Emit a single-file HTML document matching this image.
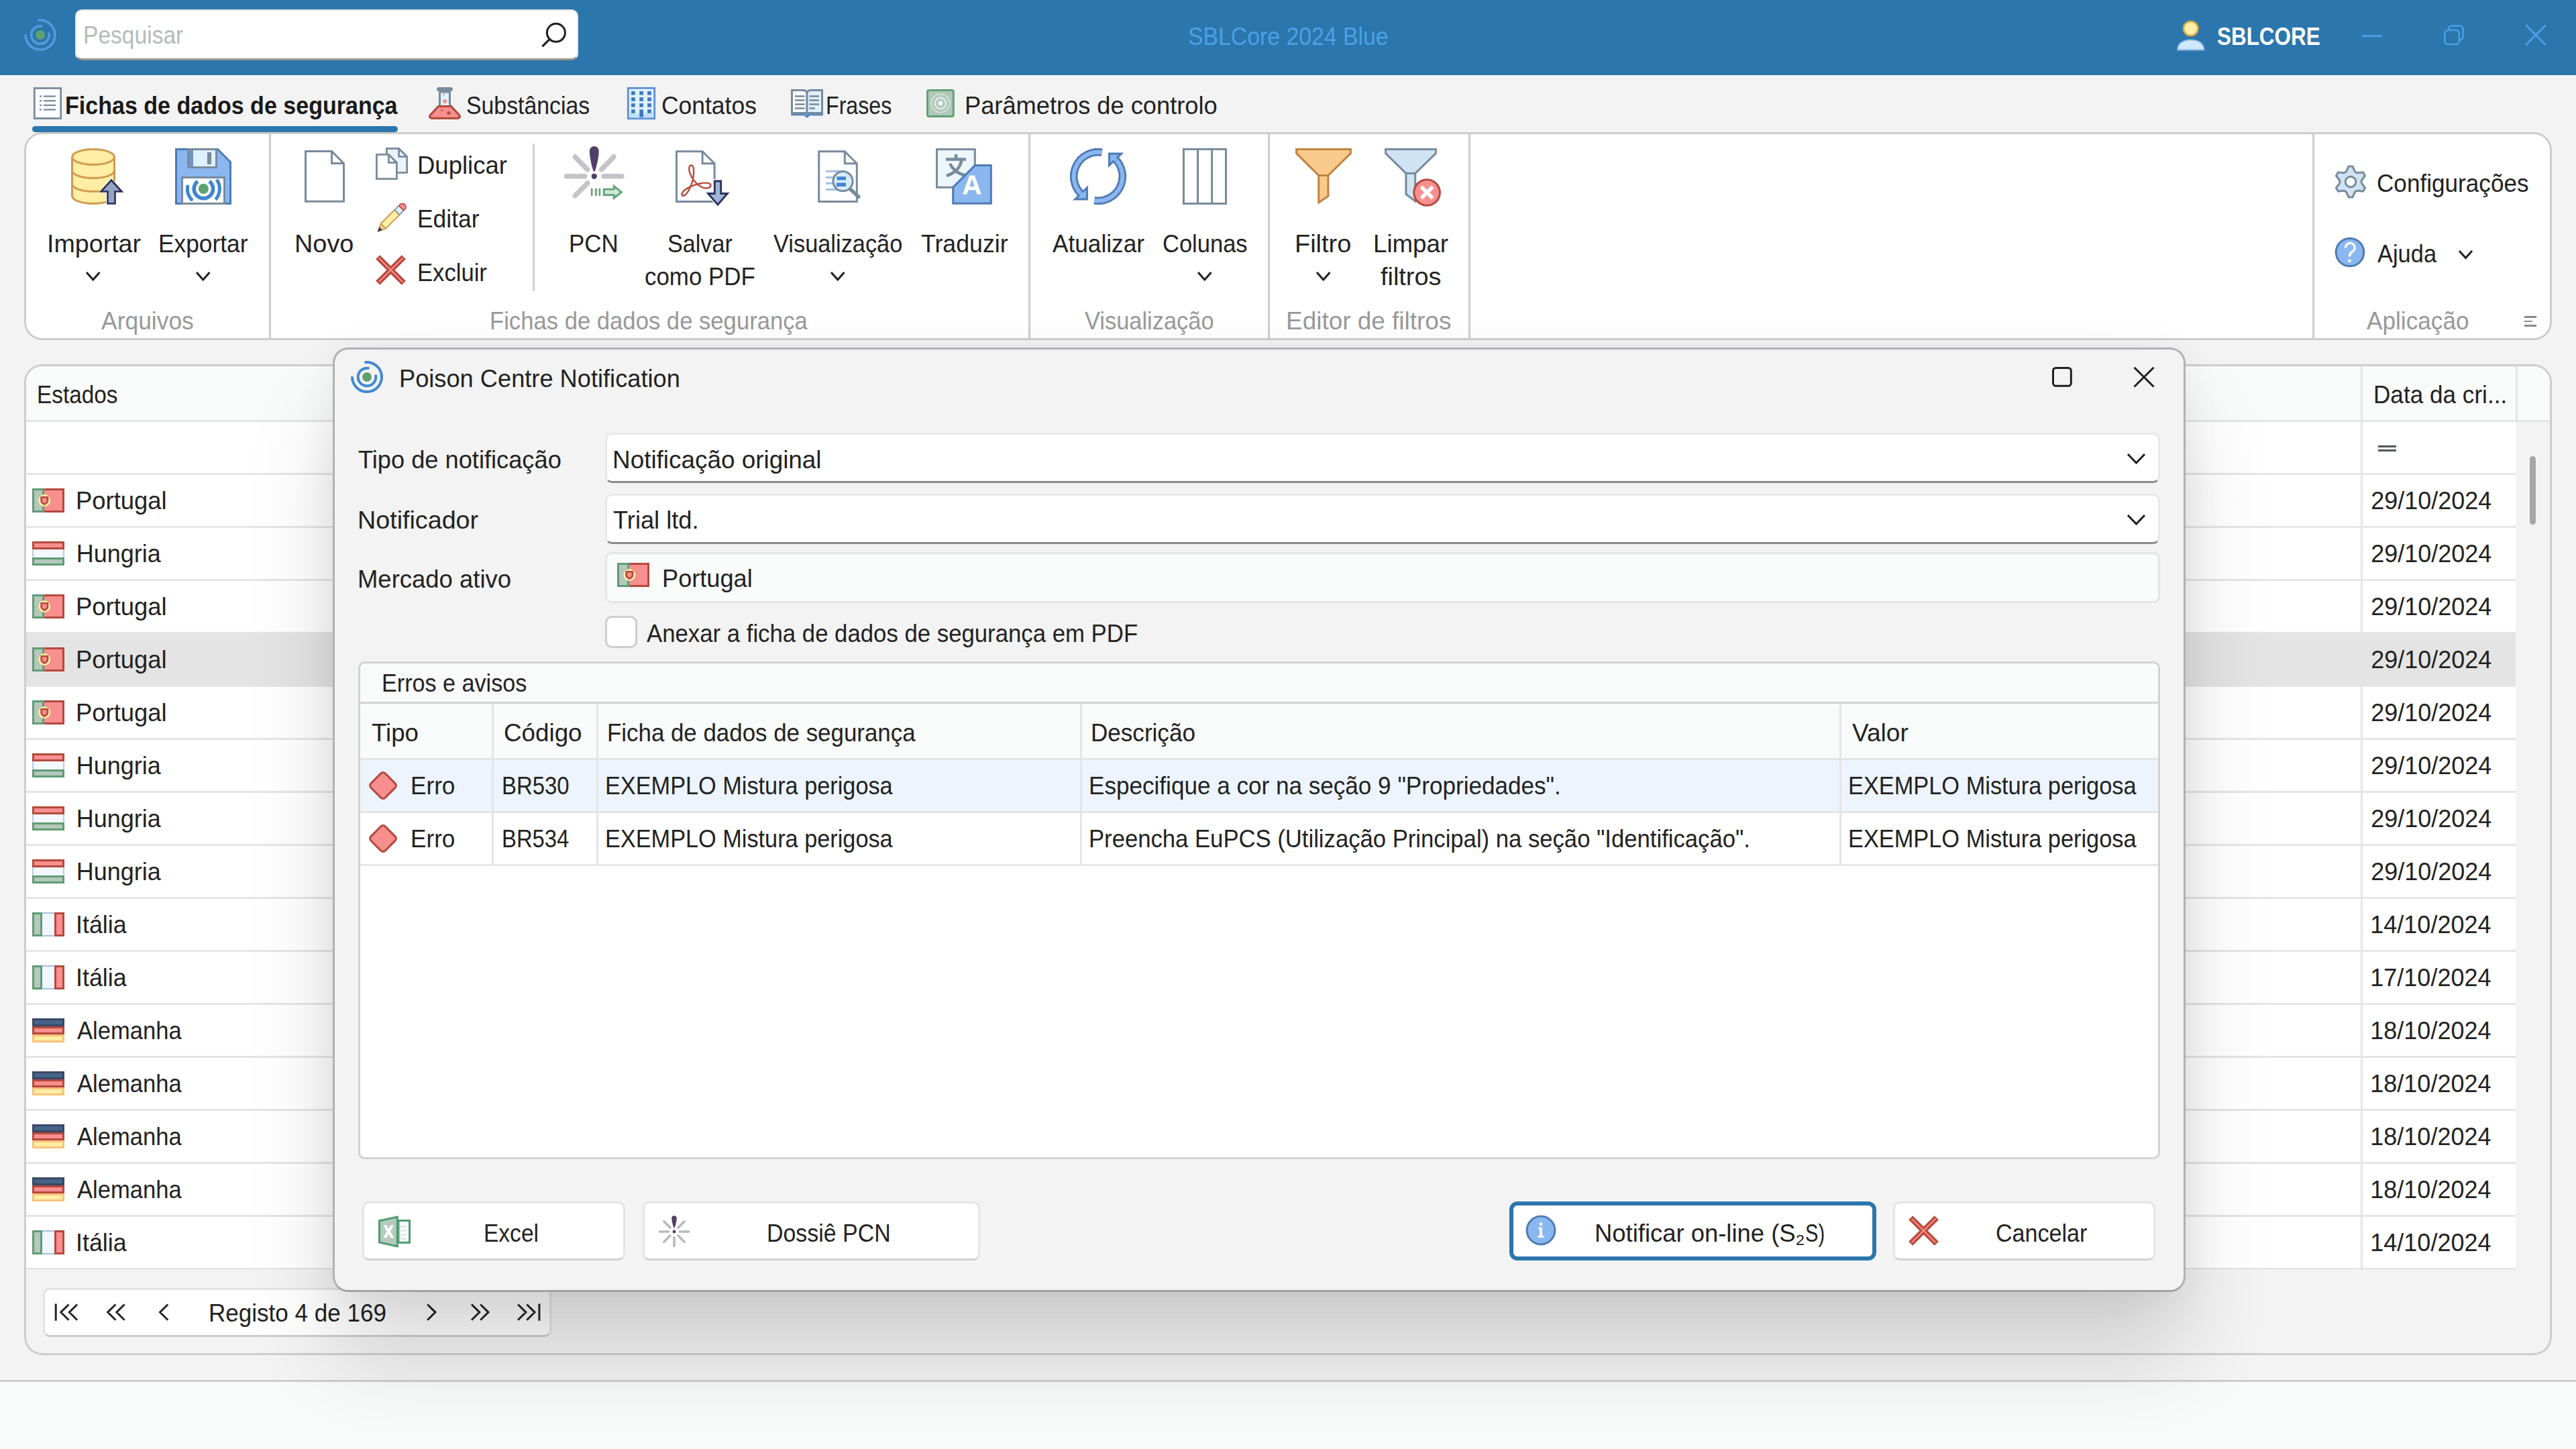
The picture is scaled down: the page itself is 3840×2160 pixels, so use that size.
<!DOCTYPE html>
<html><head><meta charset="utf-8"><title>SBLCore 2024 Blue</title>
<style>
html,body{margin:0;padding:0;}
body{width:3840px;height:2160px;overflow:hidden;background:#f3f3f3;position:relative;font-family:"Liberation Sans",sans-serif;}
.b{position:absolute;box-sizing:border-box;display:block;}
.t{position:absolute;white-space:nowrap;line-height:1;transform-origin:0 0;font-family:"Liberation Sans",sans-serif;}
</style></head><body>
<div class="b" style="left:0px;top:0px;width:3840px;height:112px;background:#2b76ad;"></div>
<svg class="b" style="left:31.9px;top:24px" width="56.00000000000001" height="56" viewBox="31.9 24 56.00000000000001 56"><circle cx="59.9" cy="52" r="7" fill="#5fa170"/><path d="M61.75 38.83A13.3 13.3 0 1 0 73.07 50.15" fill="none" stroke="#529bdc" stroke-width="3.6" stroke-linecap="round"/><path d="M57.98 30.08A22 22 0 1 1 37.91 52.77" fill="none" stroke="#529bdc" stroke-width="3.6" stroke-linecap="round"/></svg>
<div class="b" style="left:112px;top:14px;width:750px;height:76px;background:#fff;border-radius:10px;border:2px solid #e9e7e5;border-bottom:3px solid #9a958f;"></div>
<span class="t" style="left:124.0px;top:35.0px;font-size:36px;color:#b4bcba;transform:scaleX(0.9325);">Pesquisar</span>
<svg class="b" style="left:804px;top:31px" width="43" height="43" viewBox="804 31 43 43"><circle cx="828.900" cy="48.800" r="13.500" fill="none" stroke="#1f1f1f" stroke-width="3"/><path d="M819.300 58.400L808.300 69.400" stroke="#1f1f1f" stroke-width="3.200"/></svg>
<span class="t" style="left:1770.5px;top:36.8px;font-size:36px;color:#4ba0e6;transform:scaleX(0.9384);">SBLCore 2024 Blue</span>
<svg class="b" style="left:3242px;top:28px" width="48" height="50" viewBox="3242 28 48 50"><path d="M3246 74.500C3246 65 3254 59.300 3265.700 59.300S3285.500 65 3285.500 74.500z" fill="#cfe8fa" stroke="#8eb4e2" stroke-width="1.800"/><circle cx="3265.700" cy="42.500" r="10.800" fill="#ffeea3" stroke="#d9a441" stroke-width="2.600"/></svg>
<span class="t" style="left:3305.1px;top:36.7px;font-size:36px;color:#fff;font-weight:bold;transform:scaleX(0.8727);">SBLCORE</span>
<svg class="b" style="left:3518px;top:48px" width="36" height="12" viewBox="3518 48 36 12"><path d="M3521 53.800H3551" stroke="#4a9fe6" stroke-width="3"/></svg>
<svg class="b" style="left:3641px;top:35px" width="34" height="35" viewBox="3641 35 34 35"><rect x="3650.500" y="38.500" width="21" height="21" rx="4.500" fill="none" stroke="#4a9fe6" stroke-width="2.600"/><rect x="3644.300" y="45" width="21.500" height="21" rx="4.500" fill="#2b76ad" stroke="#4a9fe6" stroke-width="2.600"/></svg>
<svg class="b" style="left:3762px;top:34px" width="36" height="36" viewBox="3762 34 36 36"><path d="M3765.500 37.500L3794.700 66.800M3794.700 37.500L3765.500 66.800" stroke="#4a9fe6" stroke-width="3"/></svg>
<svg class="b" style="left:48px;top:128px" width="46" height="52" viewBox="48 128 46 52"><rect x="51.300" y="131.500" width="39.400" height="45" fill="#fff" stroke="#788b9c" stroke-width="2.800"/><rect x="59" y="142.4" width="3" height="2.300" fill="#788b9c"/><rect x="65" y="142.4" width="18" height="2.300" fill="#788b9c"/><rect x="59" y="149.1" width="3" height="2.300" fill="#788b9c"/><rect x="65" y="149.1" width="18" height="2.300" fill="#788b9c"/><rect x="59" y="155.70000000000002" width="3" height="2.300" fill="#788b9c"/><rect x="65" y="155.70000000000002" width="18" height="2.300" fill="#788b9c"/><rect x="59" y="162.3" width="3" height="2.300" fill="#788b9c"/><rect x="65" y="162.3" width="18" height="2.300" fill="#788b9c"/></svg>
<span class="t" style="left:96.8px;top:138.9px;font-size:37px;color:#1a1a1a;font-weight:bold;transform:scaleX(0.9198);">Fichas de dados de segurança</span>
<div class="b" style="left:48px;top:188px;width:545px;height:9px;background:#2b76ad;border-radius:4.5px;"></div>
<svg class="b" style="left:636px;top:127px" width="54" height="53" viewBox="636 127 54 53"><path d="M655.500 137V156.500L641.500 171.500Q639 176 644.500 176.300H681.500Q687 176 684.500 171.500L670.500 156.500V137z" fill="#dff0fe" stroke="#788b9c" stroke-width="3" stroke-linejoin="round"/><path d="M653.500 158.500H672.500L684.500 171.500Q687 176 681.500 176.300H644.500Q639 176 641.500 171.500z" fill="#f78f8f" stroke="#b5493c" stroke-width="3" stroke-linejoin="round"/><rect x="651.500" y="130.500" width="23" height="5" rx="2" fill="#788b9c" stroke="#788b9c" stroke-width="1"/><circle cx="663.200" cy="151" r="3" fill="#f78f8f"/><circle cx="661.500" cy="140.600" r="1.500" fill="#f78f8f"/><circle cx="669" cy="168.500" r="2.600" fill="#b5493c"/><circle cx="658.700" cy="164.500" r="1.300" fill="#b5493c"/></svg>
<span class="t" style="left:694.9px;top:139.5px;font-size:36px;color:#222;transform:scaleX(0.9389);">Substâncias</span>
<svg class="b" style="left:933px;top:128px" width="46" height="52" viewBox="933 128 46 52"><rect x="936.300" y="131.300" width="39.400" height="45.400" fill="#dff0fe" stroke="#5b90d3" stroke-width="2.800"/><rect x="937.700" y="169" width="36.600" height="6.300" fill="#bfe0f8"/><rect x="941.1" y="136" width="5.600" height="5.600" fill="#3c78c0"/><rect x="941.1" y="145.2" width="5.600" height="5.600" fill="#3c78c0"/><rect x="941.1" y="154.1" width="5.600" height="5.600" fill="#3c78c0"/><rect x="941.1" y="163.2" width="5.600" height="5.600" fill="#3c78c0"/><rect x="953.3000000000001" y="136" width="5.600" height="5.600" fill="#3c78c0"/><rect x="953.3000000000001" y="145.2" width="5.600" height="5.600" fill="#3c78c0"/><rect x="953.3000000000001" y="154.1" width="5.600" height="5.600" fill="#3c78c0"/><rect x="953.3000000000001" y="163.2" width="5.600" height="11.600" fill="#3c78c0"/><rect x="965.2" y="136" width="5.600" height="5.600" fill="#3c78c0"/><rect x="965.2" y="145.2" width="5.600" height="5.600" fill="#3c78c0"/><rect x="965.2" y="154.1" width="5.600" height="5.600" fill="#3c78c0"/><rect x="965.2" y="163.2" width="5.600" height="5.600" fill="#3c78c0"/></svg>
<span class="t" style="left:986.2px;top:139.5px;font-size:36px;color:#222;transform:scaleX(0.9846);">Contatos</span>
<svg class="b" style="left:1177px;top:131px" width="52" height="47" viewBox="1177 131 52 47"><path d="M1180 168H1226V171.500H1207L1203 175L1199 171.500H1180z" fill="#5b96dd" stroke="#4e7ab5" stroke-width="1.500"/><path d="M1180.500 134.500H1197Q1202 134.500 1203 138.500V168.500H1180.500z" fill="#fff" stroke="#788b9c" stroke-width="3"/><path d="M1225.500 134.500H1209Q1204 134.500 1203 138.500V168.500H1225.500z" fill="#dff0fe" stroke="#788b9c" stroke-width="3"/><rect x="1185" y="142.2" width="14.500" height="2.600" fill="#788b9c"/><rect x="1206.500" y="142.2" width="14.5" height="2.600" fill="#788b9c"/><rect x="1185" y="148.2" width="14.500" height="2.600" fill="#788b9c"/><rect x="1206.500" y="148.2" width="14.5" height="2.600" fill="#788b9c"/><rect x="1185" y="154.2" width="14.500" height="2.600" fill="#788b9c"/><rect x="1206.500" y="154.2" width="14.5" height="2.600" fill="#788b9c"/><rect x="1185" y="160.2" width="14.500" height="2.600" fill="#788b9c"/><rect x="1206.500" y="160.2" width="8.5" height="2.600" fill="#788b9c"/></svg>
<span class="t" style="left:1230.7px;top:139.5px;font-size:36px;color:#222;transform:scaleX(0.8925);">Frases</span>
<svg class="b" style="left:1379px;top:131px" width="46" height="46" viewBox="1379 131 46 46"><rect x="1382.500" y="134.500" width="38.800" height="39" rx="2.500" fill="#b4c6b9" stroke="#5ea273" stroke-width="3"/><circle cx="1401.9" cy="154" r="13.700" fill="none" stroke="#d3e8df" stroke-width="1.600"/><circle cx="1401.9" cy="154" r="8.200" fill="none" stroke="#dcefe6" stroke-width="2.600"/><circle cx="1401.9" cy="154" r="3.200" fill="#fff"/></svg>
<span class="t" style="left:1437.5px;top:139.5px;font-size:36px;color:#222;transform:scaleX(1.0066);">Parâmetros de controlo</span>
<div class="b" style="left:36px;top:197px;width:3768px;height:310px;background:#fff;border:3px solid #cdcdcd;border-radius:27px;"></div>
<div class="b" style="left:400.5px;top:200px;width:3.0px;height:304px;background:#cdcdcd;"></div>
<div class="b" style="left:1533px;top:200px;width:3px;height:304px;background:#cdcdcd;"></div>
<div class="b" style="left:1890px;top:200px;width:3px;height:304px;background:#cdcdcd;"></div>
<div class="b" style="left:2189px;top:200px;width:3px;height:304px;background:#cdcdcd;"></div>
<div class="b" style="left:3446.5px;top:200px;width:3.0px;height:304px;background:#cdcdcd;"></div>
<div class="b" style="left:794px;top:214px;width:3px;height:220px;background:#d2d2d2;"></div>
<svg class="b" style="left:103px;top:218px" width="85" height="90" viewBox="103 218 85 90"><path d="M107.5 234V292C107.5 298.5 121 303.5 139 303.5S170.5 298.5 170.5 292V234" fill="#ffeea3" stroke="#d09a4f" stroke-width="3"/><ellipse cx="139" cy="234" rx="31.5" ry="11.5" fill="#ffeea3" stroke="#d09a4f" stroke-width="3"/><path d="M107.5 254C107.5 260.5 121 265.5 139 265.5S170.5 260.5 170.5 254" fill="none" stroke="#d09a4f" stroke-width="3"/><path d="M107.5 274C107.5 280.5 121 285.5 139 285.5S170.5 280.5 170.5 274" fill="none" stroke="#d09a4f" stroke-width="3"/><path d="M166 265L186 287.5H173V306H158V287.5H146z" fill="#fff"/><path d="M166 268.5L181.5 285.5H171.5V303.5H160.5V285.5H150.5z" fill="#93a4c0" stroke="#2b2f5a" stroke-width="2.6"/></svg>
<svg class="b" style="left:259px;top:219px" width="88" height="88" viewBox="259 219 88 88"><path d="M262.5 222.5H324.5L343.5 241.5V303.5H262.5z" fill="#8bb7f0" stroke="#4e7ab5" stroke-width="3"/><rect x="280.5" y="222.5" width="42" height="27" fill="#6f94c6" stroke="#788b9c" stroke-width="3"/><rect x="288" y="224" width="33" height="24" fill="#dff0fe"/><rect x="309" y="227" width="6" height="18" fill="#788b9c"/><rect x="271.5" y="264.5" width="63" height="39" fill="#fff" stroke="#788b9c" stroke-width="3"/><circle cx="303.4" cy="281.4" r="7.6" fill="#5fa170"/><path d="M312.14 270.21A14.2 14.2 0 1 1 294.66 270.21" fill="none" stroke="#3f86d0" stroke-width="5.6"/><path d="M323.06 267.63A24 24 0 0 1 321.24 297.46" fill="none" stroke="#3f86d0" stroke-width="5"/><path d="M285.56 297.46A24 24 0 0 1 279.63 278.06" fill="none" stroke="#3f86d0" stroke-width="5" stroke-linecap="round"/></svg>
<span class="t" style="left:69.5px;top:346.4px;font-size:36px;color:#222;transform:scaleX(1.0450);">Importar</span>
<span class="t" style="left:236.4px;top:346.4px;font-size:36px;color:#222;transform:scaleX(0.9810);">Exportar</span>
<svg class="b" style="left:126.44999999999999px;top:402.5px" width="25.5" height="17.0" viewBox="126.44999999999999 402.5 25.5 17.0"><path d="M129.45 405.5L139.2 416.5L148.95 405.5" fill="none" stroke="#1f1f1f" stroke-width="3"/></svg>
<svg class="b" style="left:290.25px;top:402.5px" width="25.5" height="17.0" viewBox="290.25 402.5 25.5 17.0"><path d="M293.25 405.5L303 416.5L312.75 405.5" fill="none" stroke="#1f1f1f" stroke-width="3"/></svg>
<svg class="b" style="left:452px;top:222.3px" width="64" height="81.69999999999999" viewBox="452 222.3 64 81.69999999999999"><path d="M455.5 225.8H494.5L512.5 243.8V300.5H455.5z" fill="#fff" stroke="#788b9c" stroke-width="3" stroke-linejoin="miter"/><path d="M494.5 225.8V243.8H512.5" fill="none" stroke="#788b9c" stroke-width="3"/></svg>
<span class="t" style="left:438.9px;top:346.4px;font-size:36px;color:#222;transform:scaleX(1.0516);">Novo</span>
<svg class="b" style="left:558px;top:218px" width="52" height="52" viewBox="558 218 52 52"><path d="M576.4 221.4H594.6L606.6 233.4V257.40000000000003H576.4z" fill="#eaf3fc" stroke="#788b9c" stroke-width="2.8" stroke-linejoin="miter"/><path d="M594.6 221.4V233.4H606.6" fill="none" stroke="#788b9c" stroke-width="2.8"/><path d="M561.4 230.4H579.4L591.4 242.4V266.6H561.4z" fill="#fff" stroke="#788b9c" stroke-width="2.8" stroke-linejoin="miter"/><path d="M579.4 230.4V242.4H591.4" fill="none" stroke="#788b9c" stroke-width="2.8"/></svg>
<span class="t" style="left:622.0px;top:228.6px;font-size:36px;color:#222;transform:scaleX(1.0138);">Duplicar</span>
<svg class="b" style="left:558px;top:298px" width="52" height="50" viewBox="558 298 52 50"><g transform="translate(563.5 344.8) rotate(-44.93)"><path d="M0 0L11 -5.1H40V5.1H11z" fill="#f9cf85" stroke="#c99546" stroke-width="1.6" stroke-linejoin="round"/><path d="M11 -5.1H40V5.1H11z" fill="#ffeea3" stroke="#c99546" stroke-width="1.6"/><path d="M0 0L5.5 -2.55V2.55z" fill="#36404d" stroke="#36404d" stroke-width="1"/><rect x="40" y="-5.1" width="9" height="10.2" fill="#dff0fe" stroke="#788b9c" stroke-width="1.6"/><path d="M49 -5.1H51.5A5.1 5.1 0 0 1 51.5 5.1H49z" fill="#f78f8f" stroke="#c74343" stroke-width="1.6"/></g></svg>
<span class="t" style="left:622.1px;top:309.1px;font-size:36px;color:#222;transform:scaleX(0.9834);">Editar</span>
<svg class="b" style="left:558px;top:378px" width="49" height="49" viewBox="558 378 49 49"><path d="M563.2 383.2L601.8 421.8M601.8 383.2L563.2 421.8" stroke="#b94a3d" stroke-width="8.6" fill="none" stroke-linecap="butt"/><path d="M564.7 384.7L600.3 420.3M600.3 384.7L564.7 420.3" stroke="#f58d8d" stroke-width="2.2" fill="none"/></svg>
<span class="t" style="left:622.2px;top:389.1px;font-size:36px;color:#222;transform:scaleX(0.9616);">Excluir</span>
<svg class="b" style="left:838px;top:215px" width="96" height="86" viewBox="838 215 96 86"><path d="M844.7 262.8L871.5999999999999 262.8" stroke="#c3c3c9" stroke-width="7.5" stroke-linecap="round"/><path d="M900.1 262.8L926.9 262.8" stroke="#c3c3c9" stroke-width="7.5" stroke-linecap="round"/><path d="M857.2 233.8L875.7 252.6" stroke="#c3c3c9" stroke-width="7.5" stroke-linecap="round"/><path d="M914.8 233.8L896.6 252.6" stroke="#c3c3c9" stroke-width="7.5" stroke-linecap="round"/><path d="M875.9 272.9L857.2 291.8" stroke="#c3c3c9" stroke-width="7.5" stroke-linecap="round"/><path d="M885.8 256C883.5999999999999 256 878.8 234 878.8 225A7 7 0 0 1 892.8 225C892.8 234 888.0 256 885.8 256z" fill="#4f3f68"/><circle cx="885.8" cy="262.8" r="4.1" fill="#4f3f68"/><rect x="880.9" y="280.8" width="2.6" height="11.2" fill="#5ba373"/><rect x="887" y="280.8" width="2.6" height="11.2" fill="#5ba373"/><rect x="892.6" y="280.8" width="2.6" height="11.2" fill="#5ba373"/><path d="M900.3 282.2H915.2V277.5L926.3 286.4L915.2 295.3V290.6H900.3z" fill="#d4e6dd" stroke="#5ba373" stroke-width="2.8" stroke-linejoin="miter"/></svg>
<span class="t" style="left:848.1px;top:346.4px;font-size:36px;color:#222;transform:scaleX(0.9697);">PCN</span>
<svg class="b" style="left:1005px;top:222px" width="87" height="89" viewBox="1005 222 87 89"><path d="M1008.5 225.8H1047.1L1065.1 243.8V300.5H1008.5z" fill="#fff" stroke="#788b9c" stroke-width="3" stroke-linejoin="miter"/><path d="M1047.1 225.8V243.8H1065.1" fill="none" stroke="#788b9c" stroke-width="3"/><path d="M1031 246.5C1027.5 246 1026 251 1028.5 258C1031 266 1038 275 1046 279C1053 282 1059.5 280 1059.5 276.5C1059.500 273 1053 271.500 1044 273.5C1033 275.5 1022 281 1018 286C1015 290 1016.5 292.5 1019.5 291.500C1024 290 1029 281 1032 271C1035 261 1035 247 1031 246.5z" fill="none" stroke="#b94a3d" stroke-width="2.4" stroke-linejoin="round"/><path d="M1062 267H1078V286H1090L1070 309L1050 286H1062z" fill="#fff"/><path d="M1065.3 270H1074.7V288.500H1084.500L1070 305.2L1055.500 288.500H1065.3z" fill="#9fb6d6" stroke="#2b2f5a" stroke-width="2.8"/></svg>
<span class="t" style="left:994.5px;top:346.4px;font-size:36px;color:#222;transform:scaleX(0.9486);">Salvar</span>
<span class="t" style="left:961.0px;top:395.0px;font-size:36px;color:#222;transform:scaleX(0.9696);">como PDF</span>
<svg class="b" style="left:1217px;top:222px" width="68" height="82" viewBox="1217 222 68 82"><path d="M1220.7 225.8H1259.3L1277.3 243.8V300.5H1220.7z" fill="#fff" stroke="#788b9c" stroke-width="3" stroke-linejoin="miter"/><path d="M1259.3 225.8V243.8H1277.3" fill="none" stroke="#788b9c" stroke-width="3"/><rect x="1231" y="253.70000000000002" width="24" height="3.2" fill="#a9c1e6"/><rect x="1231" y="263.0" width="24" height="3.2" fill="#a9c1e6"/><rect x="1231" y="271.7" width="24" height="3.2" fill="#a9c1e6"/><rect x="1231" y="281.0" width="24" height="3.2" fill="#a9c1e6"/><path d="M1267 281.400L1279.800 293.300" stroke="#788b9c" stroke-width="5.4" stroke-linecap="round"/><circle cx="1256.500" cy="270.200" r="14.6" fill="#d6ecfb" stroke="#788b9c" stroke-width="3"/><path d="M1247.500 265.900H1261M1246.800 275.200H1261" stroke="#3f86d0" stroke-width="5.4"/></svg>
<span class="t" style="left:1152.9px;top:346.4px;font-size:36px;color:#222;transform:scaleX(0.9548);">Visualização</span>
<svg class="b" style="left:1235.65px;top:402.5px" width="25.5" height="17.0" viewBox="1235.65 402.5 25.5 17.0"><path d="M1238.65 405.5L1248.4 416.5L1258.15 405.5" fill="none" stroke="#1f1f1f" stroke-width="3"/></svg>
<svg class="b" style="left:1393px;top:219px" width="88" height="88" viewBox="1393 219 88 88"><rect x="1396.5" y="222.6" width="56.8" height="56.7" fill="#eef6fd" stroke="#788b9c" stroke-width="3"/><path d="M1410 237.5H1440M1425 230V237.500M1433.500 238C1432 249 1424 258 1411 262M1416 244C1420 252 1428 259 1439 261.500" fill="none" stroke="#788b9c" stroke-width="4.6"/><path d="M1453.300 246.600H1477.300V303.300H1420.700V279.200z" fill="#8bb7f0" stroke="#4e7ab5" stroke-width="3" stroke-linejoin="miter"/><path d="M1435 289.500L1445.200 261.500H1452.800L1463 289.500H1456.300L1454.300 283.300H1443.500L1441.500 289.500zM1445.200 278H1452.600L1449 266.500z" fill="#fff"/></svg>
<span class="t" style="left:1372.8px;top:346.4px;font-size:36px;color:#222;transform:scaleX(0.9914);">Traduzir</span>
<svg class="b" style="left:1592px;top:218px" width="90" height="90" viewBox="1592 218 90 90"><path d="M1642.68 227.15A36.3 36.3 0 0 0 1611.78 289.11" fill="none" stroke="#4e7ab5" stroke-width="11.6"/><path d="M1642.68 227.15A36.3 36.3 0 0 0 1611.78 289.11" fill="none" stroke="#8bb7f0" stroke-width="6"/><path d="M1631.32 298.85A36.3 36.3 0 0 0 1662.22 236.89" fill="none" stroke="#4e7ab5" stroke-width="11.6"/><path d="M1631.32 298.85A36.3 36.3 0 0 0 1662.22 236.89" fill="none" stroke="#8bb7f0" stroke-width="6"/><path d="M1620.400 279.700V296.900H1602.700z" fill="#8bb7f0" stroke="#4e7ab5" stroke-width="3" stroke-linejoin="miter"/><path d="M1653.500 246.400V228.900H1671.700z" fill="#8bb7f0" stroke="#4e7ab5" stroke-width="3" stroke-linejoin="miter"/><path d="M1616.70 293.09A36.3 36.3 0 0 1 1610.45 287.76" fill="none" stroke="#8bb7f0" stroke-width="6"/><path d="M1657.30 232.91A36.3 36.3 0 0 1 1663.55 238.24" fill="none" stroke="#8bb7f0" stroke-width="6"/></svg>
<span class="t" style="left:1568.8px;top:346.4px;font-size:36px;color:#222;transform:scaleX(0.9783);">Atualizar</span>
<svg class="b" style="left:1761px;top:219px" width="70" height="88" viewBox="1761 219 70 88"><rect x="1764.400" y="222.400" width="63.100" height="81.100" fill="#fff" stroke="#788b9c" stroke-width="3"/><path d="M1785.500 222V304M1806.600 222V304" stroke="#788b9c" stroke-width="3"/></svg>
<span class="t" style="left:1732.7px;top:346.4px;font-size:36px;color:#222;transform:scaleX(0.9582);">Colunas</span>
<svg class="b" style="left:1783.25px;top:402.5px" width="25.5" height="17.0" viewBox="1783.25 402.5 25.5 17.0"><path d="M1786.25 405.5L1796 416.5L1805.75 405.5" fill="none" stroke="#1f1f1f" stroke-width="3"/></svg>
<svg class="b" style="left:1929px;top:219px" width="88" height="88" viewBox="1929 219 88 88"><path d="M1932.500 222.600H2013.400V228.600L1979.900 261.500V292.400L1965.700 302V261.500L1932.500 228.600z" fill="#f9ca8c" stroke="#c2843f" stroke-width="3" stroke-linejoin="miter"/><path d="M1965.700 261.500H1979.900" stroke="#c2843f" stroke-width="3"/></svg>
<span class="t" style="left:1930.3px;top:346.4px;font-size:36px;color:#222;transform:scaleX(1.0534);">Filtro</span>
<svg class="b" style="left:1959.75px;top:402.5px" width="25.5" height="17.0" viewBox="1959.75 402.5 25.5 17.0"><path d="M1962.75 405.5L1972.5 416.5L1982.25 405.5" fill="none" stroke="#1f1f1f" stroke-width="3"/></svg>
<svg class="b" style="left:2062px;top:219px" width="89" height="91" viewBox="2062 219 89 91"><path d="M2065.500 222.600H2140.400V228.600L2109.700 258.400V300L2095.900 289.500V258.400L2065.500 228.600z" fill="#cfe3f3" stroke="#788b9c" stroke-width="3" stroke-linejoin="miter"/><path d="M2095.900 258.400H2109.700" stroke="#788b9c" stroke-width="3"/><circle cx="2127.100" cy="287" r="19.3" fill="#f78f8f" stroke="#b5493c" stroke-width="3"/><path d="M2118.500 278.400L2135.700 295.600M2135.700 278.400L2118.500 295.600" stroke="#fff" stroke-width="5.6"/></svg>
<span class="t" style="left:2047.0px;top:346.4px;font-size:36px;color:#222;transform:scaleX(1.0185);">Limpar</span>
<span class="t" style="left:2058.1px;top:395.0px;font-size:36px;color:#222;transform:scaleX(1.0498);">filtros</span>
<svg class="b" style="left:3477.1px;top:244px" width="54.0" height="54" viewBox="3477.1 244 54.0 54"><path d="M3498.2 254.8L3501.1 247.9L3507.1 247.9L3510.0 254.8Q3511.7 257.8 3515.2 257.8L3515.2 257.8L3522.6 256.8L3525.6 262.1L3521.0 268.0Q3519.3 271.0 3521.0 274.0L3521.0 274.0L3525.6 279.9L3522.6 285.2L3515.2 284.2Q3511.7 284.2 3510.0 287.2L3510.0 287.2L3507.1 294.1L3501.1 294.1L3498.2 287.2Q3496.5 284.2 3493.0 284.2L3493.0 284.2L3485.6 285.2L3482.6 279.9L3487.2 274.0Q3488.9 271.0 3487.2 268.0L3487.2 268.0L3482.6 262.1L3485.6 256.8L3493.0 257.8Q3496.5 257.8 3498.2 254.8z" fill="#cfe3f3" stroke="#788b9c" stroke-width="3" stroke-linejoin="round"/><circle cx="3504.1" cy="271" r="7.8" fill="#fff" stroke="#788b9c" stroke-width="3"/></svg>
<span class="t" style="left:3542.7px;top:255.9px;font-size:36px;color:#222;transform:scaleX(0.9758);">Configurações</span>
<svg class="b" style="left:3477.6px;top:350.6px" width="50.0" height="50.0" viewBox="3477.6 350.6 50.0 50.0"><circle cx="3502.6" cy="375.6" r="20.8" fill="#8bb7f0" stroke="#4e7ab5" stroke-width="3"/><path d="M3496.1 369.1A6.8 6.8 0 1 1 3505.6 375.1C3502.6 377.1 3502.1 378.6 3502.1 382.1" fill="none" stroke="#fff" stroke-width="3.4"/><circle cx="3502.1" cy="388.40000000000003" r="2.3" fill="#fff"/></svg>
<span class="t" style="left:3543.9px;top:361.2px;font-size:36px;color:#222;transform:scaleX(0.9564);">Ajuda</span>
<svg class="b" style="left:3662.7px;top:371.05px" width="25.0" height="16.5" viewBox="3662.7 371.05 25.0 16.5"><path d="M3665.7 374.05L3675.2 384.55L3684.7 374.05" fill="none" stroke="#1f1f1f" stroke-width="3"/></svg>
<span class="t" style="left:151.4px;top:460.9px;font-size:36px;color:#989898;transform:scaleX(0.9841);">Arquivos</span>
<span class="t" style="left:729.9px;top:460.9px;font-size:36px;color:#989898;transform:scaleX(0.9624);">Fichas de dados de segurança</span>
<span class="t" style="left:1617.4px;top:460.9px;font-size:36px;color:#989898;transform:scaleX(0.9558);">Visualização</span>
<span class="t" style="left:1917.0px;top:460.9px;font-size:36px;color:#989898;transform:scaleX(1.0261);">Editor de filtros</span>
<span class="t" style="left:3527.9px;top:460.9px;font-size:36px;color:#989898;transform:scaleX(0.9770);">Aplicação</span>
<div class="b" style="left:3763px;top:471px;width:18px;height:2.5px;background:#8a8a8a;"></div>
<div class="b" style="left:3763px;top:477.5px;width:12px;height:2.5px;background:#8a8a8a;"></div>
<div class="b" style="left:3763px;top:484px;width:18px;height:2.5px;background:#8a8a8a;"></div>
<div class="b" style="left:36px;top:543px;width:3768px;height:1477px;background:#f3f3f3;border:3px solid #cdcdcd;border-radius:27px;overflow:hidden;"><div class="b" style="left:0;top:0;width:3762px;height:82px;background:#f9fafa;"></div><div class="b" style="left:0;top:82px;width:3711px;height:1266px;background:#fff;"></div></div>
<div class="b" style="left:39px;top:626px;width:3762px;height:3px;background:#e5e5e5;"></div>
<span class="t" style="left:54.9px;top:571.2px;font-size:36px;color:#222;transform:scaleX(0.9259);">Estados</span>
<span class="t" style="left:3537.5px;top:571.2px;font-size:36px;color:#222;transform:scaleX(0.9760);">Data da cri...</span>
<div class="b" style="left:3519px;top:546px;width:3px;height:1348px;background:#e5e5e5;"></div>
<div class="b" style="left:3750px;top:546px;width:3px;height:82px;background:#e5e5e5;"></div>
<div class="b" style="left:39px;top:945px;width:3711px;height:76px;background:#e4e4e4;"></div>
<div class="b" style="left:39px;top:705px;width:3711px;height:3px;background:#e5e5e5;"></div>
<div class="b" style="left:39px;top:784px;width:3711px;height:3px;background:#e5e5e5;"></div>
<div class="b" style="left:39px;top:863px;width:3711px;height:3px;background:#e5e5e5;"></div>
<div class="b" style="left:39px;top:942px;width:3711px;height:3px;background:#e5e5e5;"></div>
<div class="b" style="left:39px;top:1021px;width:3711px;height:3px;background:#e5e5e5;"></div>
<div class="b" style="left:39px;top:1100px;width:3711px;height:3px;background:#e5e5e5;"></div>
<div class="b" style="left:39px;top:1179px;width:3711px;height:3px;background:#e5e5e5;"></div>
<div class="b" style="left:39px;top:1258px;width:3711px;height:3px;background:#e5e5e5;"></div>
<div class="b" style="left:39px;top:1337px;width:3711px;height:3px;background:#e5e5e5;"></div>
<div class="b" style="left:39px;top:1416px;width:3711px;height:3px;background:#e5e5e5;"></div>
<div class="b" style="left:39px;top:1495px;width:3711px;height:3px;background:#e5e5e5;"></div>
<div class="b" style="left:39px;top:1574px;width:3711px;height:3px;background:#e5e5e5;"></div>
<div class="b" style="left:39px;top:1653px;width:3711px;height:3px;background:#e5e5e5;"></div>
<div class="b" style="left:39px;top:1732px;width:3711px;height:3px;background:#e5e5e5;"></div>
<div class="b" style="left:39px;top:1811px;width:3711px;height:3px;background:#e5e5e5;"></div>
<div class="b" style="left:39px;top:1890px;width:3711px;height:3px;background:#e5e5e5;"></div>
<span class="t" style="left:113.0px;top:728.6px;font-size:36px;color:#222;transform:scaleX(1.0114);">Portugal</span>
<span class="t" style="left:3534.2px;top:728.6px;font-size:36px;color:#222;">29/10/2024</span>
<svg class="b" style="left:48px;top:728px;" width="48" height="36" viewBox="0 0 48 36"><rect x="1.5" y="1.5" width="45" height="33" fill="#f78f8f" stroke="#b5493c" stroke-width="3"/><rect x="1.5" y="1.5" width="15" height="33" fill="#b5c8b9" stroke="#5e9c76" stroke-width="3"/><circle cx="18.3" cy="18" r="9" fill="#ffeea3"/><path d="M13.6 13.2h9.4v5.2c0 2.6-2.2 3.9-4.7 5.2c-2.5-1.3-4.7-2.6-4.7-5.2z" fill="#f78f8f" stroke="#b5493c" stroke-width="2.6"/></svg>
<span class="t" style="left:113.8px;top:807.6px;font-size:36px;color:#222;">Hungria</span>
<span class="t" style="left:3534.2px;top:807.6px;font-size:36px;color:#222;">29/10/2024</span>
<svg class="b" style="left:48px;top:807px;" width="48" height="36" viewBox="0 0 48 36"><rect x="1.5" y="1.5" width="45" height="9" fill="#f78f8f" stroke="#b5493c" stroke-width="3"/><rect x="0" y="12" width="48" height="12" fill="#f3f8fe"/><path d="M1 12V24M47 12V24" stroke="#b9cbee" stroke-width="2"/><rect x="1.5" y="25.5" width="45" height="9" fill="#b5c8b9" stroke="#5e9c76" stroke-width="3"/></svg>
<span class="t" style="left:113.0px;top:886.6px;font-size:36px;color:#222;transform:scaleX(1.0114);">Portugal</span>
<span class="t" style="left:3534.2px;top:886.6px;font-size:36px;color:#222;">29/10/2024</span>
<svg class="b" style="left:48px;top:886px;" width="48" height="36" viewBox="0 0 48 36"><rect x="1.5" y="1.5" width="45" height="33" fill="#f78f8f" stroke="#b5493c" stroke-width="3"/><rect x="1.5" y="1.5" width="15" height="33" fill="#b5c8b9" stroke="#5e9c76" stroke-width="3"/><circle cx="18.3" cy="18" r="9" fill="#ffeea3"/><path d="M13.6 13.2h9.4v5.2c0 2.6-2.2 3.9-4.7 5.2c-2.5-1.3-4.7-2.6-4.7-5.2z" fill="#f78f8f" stroke="#b5493c" stroke-width="2.6"/></svg>
<span class="t" style="left:113.0px;top:965.6px;font-size:36px;color:#222;transform:scaleX(1.0114);">Portugal</span>
<span class="t" style="left:3534.2px;top:965.6px;font-size:36px;color:#222;">29/10/2024</span>
<svg class="b" style="left:48px;top:965px;" width="48" height="36" viewBox="0 0 48 36"><rect x="1.5" y="1.5" width="45" height="33" fill="#f78f8f" stroke="#b5493c" stroke-width="3"/><rect x="1.5" y="1.5" width="15" height="33" fill="#b5c8b9" stroke="#5e9c76" stroke-width="3"/><circle cx="18.3" cy="18" r="9" fill="#ffeea3"/><path d="M13.6 13.2h9.4v5.2c0 2.6-2.2 3.9-4.7 5.2c-2.5-1.3-4.7-2.6-4.7-5.2z" fill="#f78f8f" stroke="#b5493c" stroke-width="2.6"/></svg>
<span class="t" style="left:113.0px;top:1044.6px;font-size:36px;color:#222;transform:scaleX(1.0114);">Portugal</span>
<span class="t" style="left:3534.2px;top:1044.6px;font-size:36px;color:#222;">29/10/2024</span>
<svg class="b" style="left:48px;top:1044px;" width="48" height="36" viewBox="0 0 48 36"><rect x="1.5" y="1.5" width="45" height="33" fill="#f78f8f" stroke="#b5493c" stroke-width="3"/><rect x="1.5" y="1.5" width="15" height="33" fill="#b5c8b9" stroke="#5e9c76" stroke-width="3"/><circle cx="18.3" cy="18" r="9" fill="#ffeea3"/><path d="M13.6 13.2h9.4v5.2c0 2.6-2.2 3.9-4.7 5.2c-2.5-1.3-4.7-2.6-4.7-5.2z" fill="#f78f8f" stroke="#b5493c" stroke-width="2.6"/></svg>
<span class="t" style="left:113.8px;top:1123.6px;font-size:36px;color:#222;">Hungria</span>
<span class="t" style="left:3534.2px;top:1123.6px;font-size:36px;color:#222;">29/10/2024</span>
<svg class="b" style="left:48px;top:1123px;" width="48" height="36" viewBox="0 0 48 36"><rect x="1.5" y="1.5" width="45" height="9" fill="#f78f8f" stroke="#b5493c" stroke-width="3"/><rect x="0" y="12" width="48" height="12" fill="#f3f8fe"/><path d="M1 12V24M47 12V24" stroke="#b9cbee" stroke-width="2"/><rect x="1.5" y="25.5" width="45" height="9" fill="#b5c8b9" stroke="#5e9c76" stroke-width="3"/></svg>
<span class="t" style="left:113.8px;top:1202.6px;font-size:36px;color:#222;">Hungria</span>
<span class="t" style="left:3534.2px;top:1202.6px;font-size:36px;color:#222;">29/10/2024</span>
<svg class="b" style="left:48px;top:1202px;" width="48" height="36" viewBox="0 0 48 36"><rect x="1.5" y="1.5" width="45" height="9" fill="#f78f8f" stroke="#b5493c" stroke-width="3"/><rect x="0" y="12" width="48" height="12" fill="#f3f8fe"/><path d="M1 12V24M47 12V24" stroke="#b9cbee" stroke-width="2"/><rect x="1.5" y="25.5" width="45" height="9" fill="#b5c8b9" stroke="#5e9c76" stroke-width="3"/></svg>
<span class="t" style="left:113.8px;top:1281.6px;font-size:36px;color:#222;">Hungria</span>
<span class="t" style="left:3534.2px;top:1281.6px;font-size:36px;color:#222;">29/10/2024</span>
<svg class="b" style="left:48px;top:1281px;" width="48" height="36" viewBox="0 0 48 36"><rect x="1.5" y="1.5" width="45" height="9" fill="#f78f8f" stroke="#b5493c" stroke-width="3"/><rect x="0" y="12" width="48" height="12" fill="#f3f8fe"/><path d="M1 12V24M47 12V24" stroke="#b9cbee" stroke-width="2"/><rect x="1.5" y="25.5" width="45" height="9" fill="#b5c8b9" stroke="#5e9c76" stroke-width="3"/></svg>
<span class="t" style="left:112.7px;top:1360.6px;font-size:36px;color:#222;transform:scaleX(0.9951);">Itália</span>
<span class="t" style="left:3533.3px;top:1360.6px;font-size:36px;color:#222;">14/10/2024</span>
<svg class="b" style="left:48px;top:1360px;" width="48" height="36" viewBox="0 0 48 36"><rect x="14" y="1" width="20" height="34" fill="#f0f6fd" stroke="#a9bfe6" stroke-width="2"/><rect x="1.5" y="1.5" width="12" height="33" fill="#b5c8b9" stroke="#5e9c76" stroke-width="3"/><rect x="34.5" y="1.5" width="12" height="33" fill="#f78f8f" stroke="#b5493c" stroke-width="3"/></svg>
<span class="t" style="left:112.7px;top:1439.6px;font-size:36px;color:#222;transform:scaleX(0.9951);">Itália</span>
<span class="t" style="left:3533.3px;top:1439.6px;font-size:36px;color:#222;">17/10/2024</span>
<svg class="b" style="left:48px;top:1439px;" width="48" height="36" viewBox="0 0 48 36"><rect x="14" y="1" width="20" height="34" fill="#f0f6fd" stroke="#a9bfe6" stroke-width="2"/><rect x="1.5" y="1.5" width="12" height="33" fill="#b5c8b9" stroke="#5e9c76" stroke-width="3"/><rect x="34.5" y="1.5" width="12" height="33" fill="#f78f8f" stroke="#b5493c" stroke-width="3"/></svg>
<span class="t" style="left:114.7px;top:1518.6px;font-size:36px;color:#222;transform:scaleX(0.9601);">Alemanha</span>
<span class="t" style="left:3533.3px;top:1518.6px;font-size:36px;color:#222;">18/10/2024</span>
<svg class="b" style="left:48px;top:1518px;" width="48" height="36" viewBox="0 0 48 36"><rect x="1.5" y="25.5" width="45" height="9" fill="#ffeea3" stroke="#f7c27c" stroke-width="3"/><rect x="1.5" y="13.5" width="45" height="9" fill="#f78f8f" stroke="#b5493c" stroke-width="3"/><rect x="1.5" y="1.5" width="45" height="9" fill="#456489" stroke="#3a4765" stroke-width="3"/></svg>
<span class="t" style="left:114.7px;top:1597.6px;font-size:36px;color:#222;transform:scaleX(0.9601);">Alemanha</span>
<span class="t" style="left:3533.3px;top:1597.6px;font-size:36px;color:#222;">18/10/2024</span>
<svg class="b" style="left:48px;top:1597px;" width="48" height="36" viewBox="0 0 48 36"><rect x="1.5" y="25.5" width="45" height="9" fill="#ffeea3" stroke="#f7c27c" stroke-width="3"/><rect x="1.5" y="13.5" width="45" height="9" fill="#f78f8f" stroke="#b5493c" stroke-width="3"/><rect x="1.5" y="1.5" width="45" height="9" fill="#456489" stroke="#3a4765" stroke-width="3"/></svg>
<span class="t" style="left:114.7px;top:1676.6px;font-size:36px;color:#222;transform:scaleX(0.9601);">Alemanha</span>
<span class="t" style="left:3533.3px;top:1676.6px;font-size:36px;color:#222;">18/10/2024</span>
<svg class="b" style="left:48px;top:1676px;" width="48" height="36" viewBox="0 0 48 36"><rect x="1.5" y="25.5" width="45" height="9" fill="#ffeea3" stroke="#f7c27c" stroke-width="3"/><rect x="1.5" y="13.5" width="45" height="9" fill="#f78f8f" stroke="#b5493c" stroke-width="3"/><rect x="1.5" y="1.5" width="45" height="9" fill="#456489" stroke="#3a4765" stroke-width="3"/></svg>
<span class="t" style="left:114.7px;top:1755.6px;font-size:36px;color:#222;transform:scaleX(0.9601);">Alemanha</span>
<span class="t" style="left:3533.3px;top:1755.6px;font-size:36px;color:#222;">18/10/2024</span>
<svg class="b" style="left:48px;top:1755px;" width="48" height="36" viewBox="0 0 48 36"><rect x="1.5" y="25.5" width="45" height="9" fill="#ffeea3" stroke="#f7c27c" stroke-width="3"/><rect x="1.5" y="13.5" width="45" height="9" fill="#f78f8f" stroke="#b5493c" stroke-width="3"/><rect x="1.5" y="1.5" width="45" height="9" fill="#456489" stroke="#3a4765" stroke-width="3"/></svg>
<span class="t" style="left:112.7px;top:1834.6px;font-size:36px;color:#222;transform:scaleX(0.9951);">Itália</span>
<span class="t" style="left:3533.3px;top:1834.6px;font-size:36px;color:#222;">14/10/2024</span>
<svg class="b" style="left:48px;top:1834px;" width="48" height="36" viewBox="0 0 48 36"><rect x="14" y="1" width="20" height="34" fill="#f0f6fd" stroke="#a9bfe6" stroke-width="2"/><rect x="1.5" y="1.5" width="12" height="33" fill="#b5c8b9" stroke="#5e9c76" stroke-width="3"/><rect x="34.5" y="1.5" width="12" height="33" fill="#f78f8f" stroke="#b5493c" stroke-width="3"/></svg>
<div class="b" style="left:3545px;top:664px;width:27px;height:3px;background:#50555d;"></div>
<div class="b" style="left:3545px;top:670px;width:27px;height:3px;background:#50555d;"></div>
<div class="b" style="left:3771px;top:680px;width:9px;height:102px;background:#a6a6a6;border-radius:5px;"></div>
<div class="b" style="left:64px;top:1919.5px;width:758px;height:73.0px;background:#fff;border:3px solid #e3e3e3;border-bottom-color:#cdcdcd;border-radius:10px;"></div>
<span class="t" style="left:311.0px;top:1940.0px;font-size:36px;color:#222;transform:scaleX(0.9733);">Registo 4 de 169</span>
<svg class="b" style="left:78px;top:1940px" width="732" height="33" viewBox="78 1940 732 33"><path d="M83.200 1943.5V1968.7M102.5 1944.5L90.7 1956.1L102.5 1967.7M115.1 1944.5L103.3 1956.1L115.1 1967.7M172.4 1944.5L160.6 1956.1L172.4 1967.7M185.60000000000002 1944.5L173.8 1956.1L185.60000000000002 1967.7M250.3 1944.5L238.5 1956.1L250.3 1967.7M637.2 1944.5L649.0 1956.1L637.2 1967.7M703 1944.5L714.8 1956.1L703 1967.7M716.2 1944.5L728.0 1956.1L716.2 1967.7M772.1 1944.5L783.9 1956.1L772.1 1967.7M785.3 1944.5L797.0999999999999 1956.1L785.3 1967.7M803.900 1943.5V1968.7" fill="none" stroke="#262626" stroke-width="3"/></svg>
<div class="b" style="left:0px;top:2057px;width:3840px;height:3px;background:#cdcdcd;"></div>
<div class="b" style="left:0px;top:2060px;width:3840px;height:100px;background:#f9fafa;"></div>
<div class="b" style="left:496px;top:518px;width:2762px;height:1408px;background:#f3f3f3;border:3px solid #b1b1b5;border-bottom-color:#a2a2a4;border-radius:23px;box-shadow:0 95px 130px rgba(0,0,0,.145),0 8px 60px rgba(0,0,0,.06);"></div>
<svg class="b" style="left:519px;top:534px" width="56" height="56" viewBox="519 534 56 56"><circle cx="547" cy="562" r="7" fill="#5fa170"/><path d="M548.85 548.83A13.3 13.3 0 1 0 560.17 560.15" fill="none" stroke="#3f8ad4" stroke-width="4" stroke-linecap="round"/><path d="M545.08 540.08A22 22 0 1 1 525.01 562.77" fill="none" stroke="#3f8ad4" stroke-width="4" stroke-linecap="round"/></svg>
<svg class="b" style="left:3057px;top:545px" width="34" height="34" viewBox="3057 545 34 34"><rect x="3060.500" y="548.500" width="26.800" height="26.800" rx="4" fill="none" stroke="#1f1f1f" stroke-width="3"/></svg>
<svg class="b" style="left:3178px;top:544px" width="36" height="36" viewBox="3178 544 36 36"><path d="M3181.500 547.800L3210.500 576.500M3210.500 547.800L3181.500 576.500" stroke="#1f1f1f" stroke-width="3"/></svg>
<span class="t" style="left:594.5px;top:546.9px;font-size:36px;color:#222;transform:scaleX(1.0062);">Poison Centre Notification</span>
<span class="t" style="left:534.1px;top:668.0px;font-size:36px;color:#222;transform:scaleX(1.0064);">Tipo de notificação</span>
<span class="t" style="left:533.3px;top:758.2px;font-size:36px;color:#222;transform:scaleX(1.0466);">Notificador</span>
<span class="t" style="left:533.4px;top:845.7px;font-size:36px;color:#222;transform:scaleX(1.0127);">Mercado ativo</span>
<div class="b" style="left:902px;top:645px;width:2318px;height:75px;background:#fff;border:3px solid #e8e8e8;border-bottom:3px solid #8c8c8c;border-radius:10px;"></div>
<div class="b" style="left:902px;top:736px;width:2318px;height:75px;background:#fff;border:3px solid #e8e8e8;border-bottom:3px solid #8c8c8c;border-radius:10px;"></div>
<div class="b" style="left:902px;top:823px;width:2318px;height:76px;background:#fafbfb;border:3px solid #e4e4e4;border-radius:10px;"></div>
<svg class="b" style="left:3168.5px;top:674.0px" width="31.0" height="19.0" viewBox="3168.5 674.0 31.0 19.0"><path d="M3171.5 677.0L3184 690.0L3196.5 677.0" fill="none" stroke="#1f1f1f" stroke-width="3"/></svg>
<svg class="b" style="left:3168.5px;top:765.0px" width="31.0" height="19.0" viewBox="3168.5 765.0 31.0 19.0"><path d="M3171.5 768.0L3184 781.0L3196.5 768.0" fill="none" stroke="#1f1f1f" stroke-width="3"/></svg>
<span class="t" style="left:912.9px;top:668.0px;font-size:36px;color:#222;transform:scaleX(1.0243);">Notificação original</span>
<span class="t" style="left:914.2px;top:758.2px;font-size:36px;color:#222;transform:scaleX(1.0072);">Trial ltd.</span>
<span class="t" style="left:987.4px;top:845.0px;font-size:36px;color:#222;transform:scaleX(1.0052);">Portugal</span>
<svg class="b" style="left:920px;top:839px;" width="48" height="36" viewBox="0 0 48 36"><rect x="1.5" y="1.5" width="45" height="33" fill="#f78f8f" stroke="#b5493c" stroke-width="3"/><rect x="1.5" y="1.5" width="15" height="33" fill="#b5c8b9" stroke="#5e9c76" stroke-width="3"/><circle cx="18.3" cy="18" r="9" fill="#ffeea3"/><path d="M13.6 13.2h9.4v5.2c0 2.6-2.2 3.9-4.7 5.2c-2.5-1.3-4.7-2.6-4.7-5.2z" fill="#f78f8f" stroke="#b5493c" stroke-width="2.6"/></svg>
<div class="b" style="left:902px;top:918px;width:48px;height:48px;background:#fff;border:3px solid #cdcdcd;border-radius:10px;"></div>
<span class="t" style="left:964.2px;top:926.7px;font-size:36px;color:#222;transform:scaleX(0.9653);">Anexar a ficha de dados de segurança em PDF</span>
<div class="b" style="left:534px;top:986px;width:2686px;height:742px;background:#fff;border:3px solid #d2d2d2;border-radius:10px;overflow:hidden;"><div class="b" style="left:0;top:0;width:2680px;height:144px;background:#f9fafa;"></div></div>
<span class="t" style="left:568.6px;top:1000.9px;font-size:36px;color:#222;transform:scaleX(0.9481);">Erros e avisos</span>
<div class="b" style="left:537px;top:1045.5px;width:2680px;height:3.0px;background:#d4d4d4;"></div>
<div class="b" style="left:537px;top:1130px;width:2680px;height:3px;background:#e5e5e5;"></div>
<div class="b" style="left:537px;top:1133px;width:2680px;height:76px;background:#edf4fe;"></div>
<div class="b" style="left:537px;top:1209px;width:2680px;height:3px;background:#e5e5e5;"></div>
<div class="b" style="left:537px;top:1288px;width:2680px;height:3px;background:#e5e5e5;"></div>
<div class="b" style="left:733px;top:1048.5px;width:3px;height:242.5px;background:#e5e5e5;"></div>
<div class="b" style="left:888.5px;top:1048.5px;width:3.0px;height:242.5px;background:#e5e5e5;"></div>
<div class="b" style="left:1609.5px;top:1048.5px;width:3.0px;height:242.5px;background:#e5e5e5;"></div>
<div class="b" style="left:2742px;top:1048.5px;width:3px;height:242.5px;background:#e5e5e5;"></div>
<span class="t" style="left:554.2px;top:1074.5px;font-size:36px;color:#222;transform:scaleX(1.0178);">Tipo</span>
<span class="t" style="left:751.0px;top:1074.5px;font-size:36px;color:#222;transform:scaleX(1.0216);">Código</span>
<span class="t" style="left:905.4px;top:1074.5px;font-size:36px;color:#222;transform:scaleX(0.9688);">Ficha de dados de segurança</span>
<span class="t" style="left:1626.4px;top:1074.5px;font-size:36px;color:#222;transform:scaleX(0.9741);">Descrição</span>
<span class="t" style="left:2760.9px;top:1074.5px;font-size:36px;color:#222;transform:scaleX(1.0293);">Valor</span>
<svg class="b" style="left:547px;top:1146.9px" width="48" height="48.0" viewBox="547 1146.9 48 48.0"><rect x="-15.06" y="-15.06" width="30.12" height="30.12" rx="4.500" fill="#f78f8f" stroke="#b5493c" stroke-width="3" transform="translate(571 1170.9) rotate(45)"/></svg>
<span class="t" style="left:612.2px;top:1153.5px;font-size:36px;color:#222;transform:scaleX(0.9768);">Erro</span>
<span class="t" style="left:747.8px;top:1153.5px;font-size:36px;color:#222;transform:scaleX(0.9146);">BR530</span>
<span class="t" style="left:902.0px;top:1153.5px;font-size:36px;color:#222;transform:scaleX(0.9522);">EXEMPLO Mistura perigosa</span>
<span class="t" style="left:1622.9px;top:1153.5px;font-size:36px;color:#222;transform:scaleX(0.9748);">Especifique a cor na seção 9 "Propriedades".</span>
<span class="t" style="left:2755.4px;top:1153.5px;font-size:36px;color:#222;transform:scaleX(0.9542);">EXEMPLO Mistura perigosa</span>
<svg class="b" style="left:547px;top:1226.2px" width="48" height="48.0" viewBox="547 1226.2 48 48.0"><rect x="-15.06" y="-15.06" width="30.12" height="30.12" rx="4.500" fill="#f78f8f" stroke="#b5493c" stroke-width="3" transform="translate(571 1250.2) rotate(45)"/></svg>
<span class="t" style="left:612.2px;top:1232.5px;font-size:36px;color:#222;transform:scaleX(0.9768);">Erro</span>
<span class="t" style="left:747.8px;top:1232.5px;font-size:36px;color:#222;transform:scaleX(0.9118);">BR534</span>
<span class="t" style="left:902.0px;top:1232.5px;font-size:36px;color:#222;transform:scaleX(0.9522);">EXEMPLO Mistura perigosa</span>
<span class="t" style="left:1623.0px;top:1232.5px;font-size:36px;color:#222;transform:scaleX(0.9627);">Preencha EuPCS (Utilização Principal) na seção "Identificação".</span>
<span class="t" style="left:2755.4px;top:1232.5px;font-size:36px;color:#222;transform:scaleX(0.9542);">EXEMPLO Mistura perigosa</span>
<div class="b" style="left:540px;top:1791px;width:392px;height:88px;background:#fff;border:3px solid #e4e4e4;border-bottom:3px solid #d0d0d0;border-radius:10px;"></div>
<div class="b" style="left:957.5px;top:1791px;width:503.5px;height:88px;background:#fff;border:3px solid #e4e4e4;border-bottom:3px solid #d0d0d0;border-radius:10px;"></div>
<div class="b" style="left:2250px;top:1791px;width:547px;height:88px;background:#fff;border:6px solid #2b76ad;border-radius:12px;"></div>
<div class="b" style="left:2821.5px;top:1791px;width:391.5px;height:88px;background:#fff;border:3px solid #e4e4e4;border-bottom:3px solid #d0d0d0;border-radius:10px;"></div>
<svg class="b" style="left:562px;top:1810px" width="52" height="52" viewBox="562 1810 52 52"><rect x="594" y="1819.500" width="16.500" height="32.800" fill="#fff" stroke="#4e9c6e" stroke-width="3"/><rect x="595.500" y="1827.2" width="10.500" height="2.600" fill="#dde7ee"/><rect x="595.500" y="1833.2" width="10.500" height="2.600" fill="#dde7ee"/><rect x="595.500" y="1839.2" width="10.500" height="2.600" fill="#dde7ee"/><rect x="595.500" y="1845.2" width="10.500" height="2.600" fill="#dde7ee"/><path d="M565.500 1819.700L592.300 1814V1858L565.500 1852z" fill="#b6c9be" stroke="#4e9c6e" stroke-width="3" stroke-linejoin="miter"/><path d="M571.500 1826.500H576.500L579.300 1832.200L582.200 1826.500H587L582 1835.800L587.300 1845.300H582.300L579.300 1839.400L576.200 1845.300H571.200L576.600 1835.800z" fill="#fff"/></svg>
<span class="t" style="left:721.3px;top:1820.8px;font-size:36px;color:#222;transform:scaleX(0.9312);">Excel</span>
<svg class="b" style="left:979px;top:1808.9px" width="52" height="53.0" viewBox="979 1808.9 52 53.0"><path d="M1013.5 1835.9L1026.5 1835.9" stroke="#b9b9bf" stroke-width="3.6" stroke-linecap="round"/><path d="M1011.0 1841.9L1020.2 1851.1" stroke="#b9b9bf" stroke-width="3.6" stroke-linecap="round"/><path d="M1005.0 1844.4L1005.0 1857.4" stroke="#b9b9bf" stroke-width="3.6" stroke-linecap="round"/><path d="M999.0 1841.9L989.8 1851.1" stroke="#b9b9bf" stroke-width="3.6" stroke-linecap="round"/><path d="M996.5 1835.9L983.5 1835.9" stroke="#b9b9bf" stroke-width="3.6" stroke-linecap="round"/><path d="M999.0 1829.9L989.8 1820.7" stroke="#b9b9bf" stroke-width="3.6" stroke-linecap="round"/><path d="M1011.0 1829.9L1020.2 1820.7" stroke="#b9b9bf" stroke-width="3.6" stroke-linecap="round"/><path d="M1005 1830.4C1003.8 1830.4 1001.2 1819.9 1001.2 1815.9A3.8 3.8 0 0 1 1008.8 1815.9C1008.8 1819.9 1006.2 1830.4 1005 1830.4z" fill="#4f3f68"/><circle cx="1005" cy="1835.9" r="2.4" fill="#4f3f68"/></svg>
<span class="t" style="left:1142.8px;top:1820.8px;font-size:36px;color:#222;transform:scaleX(0.9417);">Dossiê PCN</span>
<svg class="b" style="left:2271.5px;top:1809.4px" width="50.0" height="50.0" viewBox="2271.5 1809.4 50.0 50.0"><circle cx="2296.5" cy="1834.4" r="20.900" fill="#8bb7f0" stroke="#4e7ab5" stroke-width="3"/><circle cx="2296.5" cy="1825.2" r="2.300" fill="#fff"/><path d="M2293.0 1829.9H2298.3V1842.4H2301.1V1845.2H2291.9V1842.4H2294.7V1832.6000000000001H2293.0z" fill="#fff"/></svg>
<span class="t" style="left:2377.4px;top:1820.8px;font-size:36px;color:#222;transform:scaleX(1.0119);">Notificar on-line (S</span>
<span class="t" style="left:2677.3px;top:1837.9px;font-size:22px;color:#222;transform:scaleX(1.0467);">2</span>
<span class="t" style="left:2690.7px;top:1820.8px;font-size:36px;color:#222;transform:scaleX(0.8088);">S)</span>
<svg class="b" style="left:2843px;top:1810px" width="49" height="49" viewBox="2843 1810 49 49"><path d="M2848.2 1815.2L2886.8 1853.8M2886.8 1815.2L2848.2 1853.8" stroke="#b94a3d" stroke-width="8.6" fill="none" stroke-linecap="butt"/><path d="M2849.7 1816.7L2885.3 1852.3M2885.3 1816.7L2849.7 1852.3" stroke="#f58d8d" stroke-width="2.2" fill="none"/></svg>
<span class="t" style="left:2974.8px;top:1820.8px;font-size:36px;color:#222;transform:scaleX(0.9464);">Cancelar</span>
</body></html>
